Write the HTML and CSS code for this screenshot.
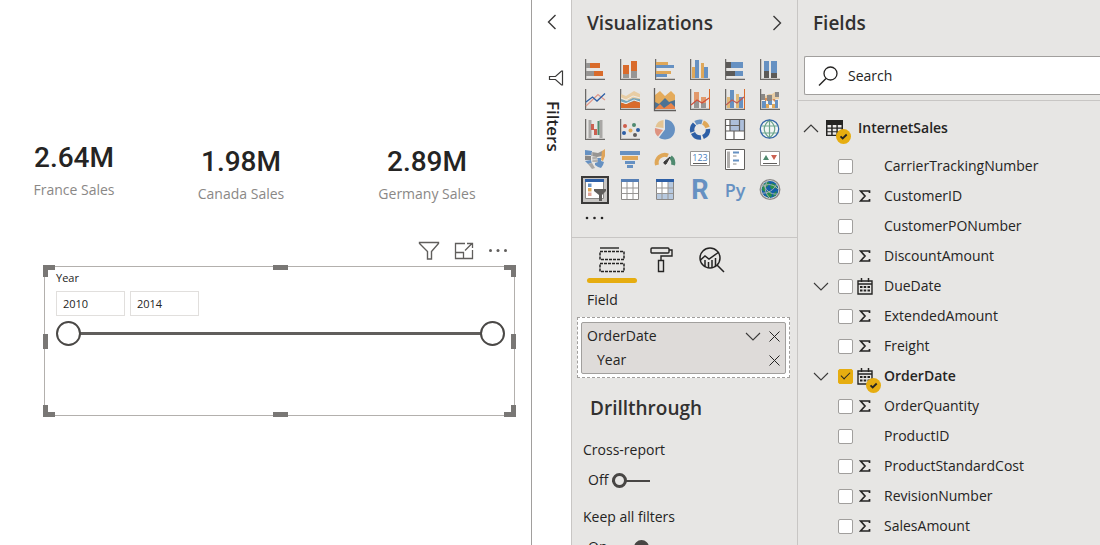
FILE: index.html
```html
<!DOCTYPE html>
<html lang="en">
<head>
<meta charset="utf-8">
<title>Sales report</title>
<link rel="stylesheet" href="styles.css">
</head>
<body>
<svg class="defs" aria-hidden="true">
  <symbol id="axis" viewBox="0 0 22 22"><path d="M2.5 0v19M2 19.500h19" stroke="#c8c6c4" fill="none"/><path d="M1.500 0v21M1 20.500h20" stroke="#6b6967" fill="none"/></symbol>
  <symbol id="sigma" viewBox="0 0 12 12"><path d="M10.500 3V1H1.500L6 6 1.500 11h9V9" fill="none" stroke="#252423" stroke-width="1.700"/></symbol>
  <symbol id="calendar" viewBox="0 0 16 17"><path d="M1 3h14v13H1z" fill="none" stroke="#252423" stroke-width="1.400"/><path d="M1 6h14M4.500 0v4M11.500 0v4" stroke="#252423" stroke-width="1.500"/><path d="M3 8h2.500v2H3zM6.700 8h2.500v2H6.700zM10.500 8H13v2h-2.500zM3 11.500h2.500v2H3zM6.700 11.500h2.500v2H6.700zM10.500 11.500H13v2h-2.500z" fill="#252423"/></symbol>
  <symbol id="down" viewBox="0 0 16 9"><path d="M1 1l7 7 7-7" fill="none" stroke="#3b3a39" stroke-width="1.100"/></symbol>
  <symbol id="cross" viewBox="0 0 11 11"><path d="M.5.5l10 10M10.500.5l-10 10" fill="none" stroke="#252423"/></symbol>
  <symbol id="badge" viewBox="0 0 15 15"><circle cx="7.500" cy="7.500" r="7.500" fill="#e6ad10"/><path d="M4.500 7.300l2.200 2.200 4-4" fill="none" stroke="#252423" stroke-width="1.800"/></symbol>
</svg>
<div class="app">
  <main class="canvas">
    <div class="cards">
      <section class="card"><div class="card-value">2.64M</div><div class="card-label">France Sales</div></section>
      <section class="card card-low"><div class="card-value">1.98M</div><div class="card-label">Canada Sales</div></section>
      <section class="card card-low"><div class="card-value">2.89M</div><div class="card-label">Germany Sales</div></section>
    </div>
    <div class="visual-tools">
      <button aria-label="Filters on this visual"><svg width="22" height="20" viewBox="0 0 22 20"><path d="M1.500 1.500h19v1l-7 8v7.500h-4v-7.500l-8-8z" fill="none" stroke="#605e5c" stroke-width="1.400"/></svg></button>
      <button aria-label="Focus mode"><svg width="20" height="18" viewBox="0 0 20 18"><path d="M11 1.500H1.500v15h17V8M1.500 10.500h8v6M11 8.500l7-7M13 1.500h5.500V6" fill="none" stroke="#605e5c" stroke-width="1.300"/></svg></button>
      <button aria-label="More options"><svg width="20" height="18" viewBox="0 0 20 18" fill="#605e5c"><circle cx="2.500" cy="8.500" r="1.500"/><circle cx="10" cy="8.500" r="1.500"/><circle cx="17.500" cy="8.500" r="1.500"/></svg></button>
    </div>
    <section class="slicer">
      <i class="grip nw"></i><i class="grip n"></i><i class="grip ne"></i><i class="grip w"></i><i class="grip e"></i><i class="grip sw"></i><i class="grip s"></i><i class="grip se"></i>
      <h3 class="slicer-title">Year</h3>
      <div class="years">
        <input type="text" class="year" value="2010" aria-label="Start year">
        <input type="text" class="year" value="2014" aria-label="End year">
      </div>
      <div class="range">
        <input type="range" min="2010" max="2014" value="2010" aria-label="From">
        <input type="range" min="2010" max="2014" value="2014" aria-label="To">
      </div>
    </section>
  </main>

  <aside class="filters">
    <button aria-label="Expand filters"><svg width="10" height="16" viewBox="0 0 10 16"><path d="M8.500 1l-7 7 7 7" fill="none" stroke="#3b3a39" stroke-width="1.400"/></svg></button>
    <svg class="filters-icon" width="16" height="16" viewBox="0 0 16 16"><path d="M14.500 1v14h-1L7.500 9.500h-6v-3h6L13.500 1z" fill="none" stroke="#3b3a39" stroke-width="1.200"/></svg>
    <h2 class="filters-title">Filters</h2>
  </aside>

  <section class="viz">
    <header class="pane-head"><h2>Visualizations</h2>
      <button aria-label="Collapse"><svg width="10" height="16" viewBox="0 0 10 16"><path d="M1.500 1l7 7-7 7" fill="none" stroke="#3b3a39" stroke-width="1.400"/></svg></button></header>
    <div class="gallery">
      <button aria-label="Stacked bar chart"><svg viewBox="0 0 22 22"><use href="#axis"/><path d="M2 4h4v5H2zM2 12h8v5H2z" fill="#979593"/><path d="M6 4h10v5H6zM10 12h9v5h-9z" fill="#d96b2b"/></svg></button>
      <button aria-label="Stacked column chart"><svg viewBox="0 0 22 22"><use href="#axis"/><path d="M4 15h6v4H4zM12 12h6v7h-6z" fill="#979593"/><path d="M4 6h6v9H4zM12 2h6v10h-6z" fill="#d96b2b"/></svg></button>
      <button aria-label="Clustered bar chart"><svg viewBox="0 0 22 22"><use href="#axis"/><path d="M2 3h12v3H2zM2 12h15v3H2z" fill="#dfa758"/><path d="M2 6h18v3H2zM2 15h11v3H2z" fill="#6691c2"/></svg></button>
      <button aria-label="Clustered column chart"><svg viewBox="0 0 22 22"><use href="#axis"/><path d="M3 8h3v11H3zM12 4h3v15h-3z" fill="#dfa758"/><path d="M6 1h4v18H6zM15 8h4v11h-4z" fill="#6691c2"/></svg></button>
      <button aria-label="100% stacked bar chart"><svg viewBox="0 0 22 22"><use href="#axis"/><path d="M2 3h5v6H2zM2 12h9v5H2z" fill="#5c5a58"/><path d="M7 3h12v6H7zM11 12h8v5h-8z" fill="#6691c2"/></svg></button>
      <button aria-label="100% stacked column chart"><svg viewBox="0 0 22 22"><use href="#axis"/><path d="M5 12h5v7H5zM12 14h6v5h-6z" fill="#5c5a58"/><path d="M5 2h5v10H5zM12 2h6v12h-6z" fill="#6691c2"/></svg></button>

      <button aria-label="Line chart"><svg viewBox="0 0 22 22"><use href="#axis"/><path d="M2 17L14 5.500l3 2.500 4 3" fill="none" stroke="#e0988a" stroke-width="1.200"/><path d="M2 13l6.500-5 4.500 4 8-7.500" fill="none" stroke="#2d5fa6" stroke-width="1.300"/></svg></button>
      <button aria-label="Area chart"><svg viewBox="0 0 22 22"><use href="#axis"/><path d="M2 5l5 2 8-5 6 3v6H2z" fill="#e8cda4"/><path d="M2 10l6 2 6-3 7 1v4H2z" fill="#78a5ba"/><path d="M2 13l5 2 8-3 6 1v6H2z" fill="#d96b2b"/><path d="M2 9l5 2 7-4 7 2M2 13l5 1.500 8-3.500 6 2" stroke="#eeece8" fill="none"/></svg></button>
      <button aria-label="Stacked area chart"><svg viewBox="0 0 22 22"><path d="M1 6l5-4 5 5 6-5 4 4v14H1z" fill="#e4ab5b"/><path d="M1 13l4 2 6-6 4 4 6-2v9H1z" fill="#4c7294"/><path d="M1 20l5-5 4 4 7-5 4 4v2z" fill="#e98449"/><path d="M.5-1v22.500H22" fill="none" stroke="#605e5c" stroke-width="1.300"/></svg></button>
      <button aria-label="Line and stacked column chart"><svg viewBox="0 0 22 22"><use href="#axis"/><path d="M5 12h5v7H5zM12 14h5v5h-5z" fill="#979593"/><path d="M5 3h5v9H5zM12 8h5v6h-5z" fill="#e2996b"/><path d="M20.500 0v20" stroke="#d96b2b"/><path d="M2 16l6-5 5 3 7-5" fill="none" stroke="#cf4f3a" stroke-width="1.200"/></svg></button>
      <button aria-label="Line and clustered column chart"><svg viewBox="0 0 22 22"><use href="#axis"/><path d="M3 8h3v11H3zM12 5h3v14h-3z" fill="#dfb877"/><path d="M6 1h4v18H6zM15 8h4v11h-4z" fill="#6691c2"/><path d="M20.500 0v20" stroke="#d96b2b"/><path d="M2 16l6-5 5 3 7-6" fill="none" stroke="#c15a55" stroke-width="1.200"/></svg></button>
      <button aria-label="Ribbon chart"><svg viewBox="0 0 22 22"><use href="#axis"/><path d="M3 7h3l4-2h3l3-2h4v7H3z" fill="#e8cda4"/><path d="M3 11h3l4 2h3l3-2h4v8H3z" fill="#f5f3f0"/><path d="M6 9h3l-3 5zM13 10h3l2 5z" fill="#d98c54"/><path d="M2 5h4v6H2zM8 6h5v6H8zM16 3h4v5h-4z" fill="#8a8886"/><path d="M3 12h4v7H3zM9 12h4v4H9zM16 11h3v8h-3z" fill="#6691c2"/><path d="M7 15h3v4H7zM13 15h3v4h-3z" fill="#dfa758"/></svg></button>

      <button aria-label="Waterfall chart"><svg viewBox="0 0 22 22"><use href="#axis"/><path d="M6 1v18M17 1v18" stroke="#a9a7a5" stroke-width="3"/><path d="M8.500 5v6M11.500 10v6" stroke="#cb6151" stroke-width="3"/><path d="M14.500 2v14" stroke="#4f8a6f" stroke-width="2"/></svg></button>
      <button aria-label="Scatter chart"><svg viewBox="0 0 22 22"><use href="#axis"/><circle cx="6" cy="7" r="2" fill="#cf5f4c"/><circle cx="15" cy="6" r="2" fill="#4f8a6f"/><circle cx="5" cy="14" r="2" fill="#2d5fa6"/><circle cx="11.500" cy="11.500" r="2" fill="#dfa758"/><circle cx="19" cy="11" r="2" fill="#2d5fa6"/><circle cx="16" cy="16" r="2" fill="#605e5c"/></svg></button>
      <button aria-label="Pie chart"><svg viewBox="0 0 22 22"><path d="M11 10.500V.5a10 10 0 1 1-6 18z" fill="#6691c2"/><path d="M9.500 9V1A9 9 0 0 0 1.500 8z" fill="#e3c493"/><path d="M9 11L1 9a9 9 0 0 0 3 8.500z" fill="#de9380"/></svg></button>
      <button aria-label="Donut chart"><svg viewBox="0 0 22 22"><g fill="none" stroke-width="4.500"><path d="M14 3.500a8 8 0 0 1 4.500 5" stroke="#dfa758"/><path d="M19 10a8 8 0 0 1-5 8M12 18.500a8 8 0 0 1-8-4.500M3.500 13a8 8 0 0 1 2-8" stroke="#2d5fa6"/><path d="M6.500 4a8 8 0 0 1 6.500-1" stroke="#6691c2"/></g></svg></button>
      <button aria-label="Treemap"><svg viewBox="0 0 22 22"><path d="M1.500.5h19v20h-19z" fill="#fff"/><path d="M6 1h14v11H6z" fill="#adbfdb"/><path d="M1.500.5h19v20h-19zM6 1v11M15.500 1v11M1 12h20M6 6.500h9.500M1 6.500h5M10 12v8" fill="none" stroke="#605e5c" stroke-width="1.200"/></svg></button>
      <button aria-label="Map"><svg viewBox="0 0 22 22"><circle cx="10.500" cy="10" r="9" fill="#f3f6f5"/><path d="M2 7h17M2 14h17M10.500 1v18M10.500 1c-7 6-7 12 0 18M10.500 1c7 6 7 12 0 18" fill="none" stroke="#6ca58c" stroke-width="1.200"/><circle cx="10.500" cy="10" r="9.200" fill="none" stroke="#3568a8" stroke-width="1.300"/></svg></button>

      <button aria-label="Filled map"><svg viewBox="0 0 22 22"><path d="M1 1l7 1v4L1 6z" fill="#6691c2"/><path d="M8 3l6 1 4-2v5l-5 1-6-1z" fill="#979593"/><path d="M18 2l3-2v7l-2 5-2-1z" fill="#e0a458"/><path d="M1 6l6 1v4H1z" fill="#8a8886"/><path d="M8 8h5l1 5H8z" fill="#b3b0ad"/><path d="M1 12l6-1 1 3-4 1z" fill="#6691c2"/><path d="M13 9h4v3l3 1-1 3-2 3-3-1-3-2v-2l3-1z" fill="#6691c2"/><path d="M4 15l4-1 3 5-3 1z" fill="#a9a7a5"/><path d="M1 6.500h6M7 11l7-1M8 3v11" stroke="#e7e6e4" stroke-width=".6"/></svg></button>
      <button aria-label="Funnel"><svg viewBox="0 0 22 22"><path d="M1 2h20v4H1zM6 12h10v3H6zM8 16h6v3H8z" fill="#6691c2"/><path d="M3 7h16v4H3z" fill="#dfa758"/></svg></button>
      <button aria-label="Gauge"><svg viewBox="0 0 22 22"><g fill="none" stroke-width="4"><path d="M3 16a8 8 0 0 1 11-9.500" stroke="#dfa758"/><path d="M16.500 8a8 8 0 0 1 2.500 8" stroke="#4f8a6f"/></g><path d="M10 13l6-5-4 7a1.500 1.500 0 0 1-2-2" fill="#3b3a39" stroke="#3b3a39"/></svg></button>
      <button aria-label="Card"><svg viewBox="0 0 22 22"><path d="M1.500 2.500h19v14h-19z" fill="#fff" stroke="#979593"/><text x="11" y="11.500" text-anchor="middle" class="icon-digits">123</text><path d="M4 14.500h14" stroke="#605e5c"/></svg></button>
      <button aria-label="Multi-row card"><svg viewBox="0 0 22 22"><path d="M1.500.5h19v20h-19z" fill="#fff" stroke="#605e5c"/><path d="M3 2.500h3v16.500H3z" fill="#b0aeac"/><path d="M9 3.500h6M9 11.500h6" stroke="#6691c2" stroke-width="2"/><path d="M9 7h3.500M9 15h3.500" stroke="#8a8886" stroke-width="1"/></svg></button>
      <button aria-label="KPI"><svg viewBox="0 0 22 22"><path d="M1.500 2.500h19v14h-19z" fill="#fff" stroke="#979593"/><path d="M4 11l3-5 3 5z" fill="#4f8a6f"/><path d="M12 6h6l-3 5z" fill="#cb6151"/><path d="M4 14.500h14" stroke="#605e5c"/></svg></button>

      <button class="selected" aria-label="Slicer" aria-pressed="true"><svg viewBox="0 0 22 22"><path d="M1.500 1.500h18v18h-18z" fill="#fff" stroke="#8a8886"/><path d="M1 0h19v3H1z" fill="#2d5fa6"/><path d="M4 4.500h3.500V8H4z" fill="#6691c2"/><path d="M4 9h3.500v3.500H4z" fill="#dfa758"/><path d="M4 13.500h3.500V17H4z" fill="#e0a69a"/><path d="M10 10h12v2l-4 4v6h-3v-6l-5-4z" fill="#605e5c"/></svg></button>
      <button aria-label="Table"><svg viewBox="0 0 22 22"><path d="M2.500.5h17v20h-17z" fill="#fff" stroke="#8a8886"/><path d="M8 3v17M14 3v17M2 9h17M2 14.500h17" stroke="#979593"/><path d="M2 0h18v3H2z" fill="#567fb5"/></svg></button>
      <button aria-label="Matrix"><svg viewBox="0 0 22 22"><path d="M2.500.5h17v20h-17z" fill="#fff" stroke="#8a8886"/><path d="M14 3h5v17H3v-5h11z" fill="#b7c9df"/><path d="M8 3v17M14 3v17M2 9h17M2 14.500h17" stroke="#979593"/><path d="M2 0h18v3H2z" fill="#2d5fa6"/></svg></button>
      <button class="lang r" aria-label="R script visual">R</button>
      <button class="lang" aria-label="Python visual">Py</button>
      <button aria-label="ArcGIS map"><svg viewBox="0 0 22 22"><circle cx="11" cy="10.500" r="8.500" fill="#1460a8"/><path d="M4 6l4-3 3 1-3 4-2 1v4l-3-2zM13 4l4 2 2 4-3-1-4 1-1-3zM8 12l4 1 1 4-3 2-3-3zM15 14l3-2-1 4-3 2z" fill="#2a9048"/><circle cx="11" cy="10.500" r="9.800" fill="none" stroke="#8a8886" stroke-width="1.300"/><path d="M4 3c2 8 7 13 15 12M9 1c-4 6-4 13 3 19M2 8c7-4 13-3 18 3M2 14c6 1 14-3 16-10" fill="none" stroke="#a9b1b6"/></svg></button>
    </div>
    <button class="more-visuals" aria-label="Get more visuals"><svg width="20" height="4" viewBox="0 0 20 4" fill="#252423"><circle cx="2" cy="2" r="1.300"/><circle cx="9.500" cy="2" r="1.300"/><circle cx="17" cy="2" r="1.300"/></svg></button>

    <div class="tabs">
      <button class="tab active" aria-label="Fields"><svg width="26" height="26" viewBox="0 0 26 26" fill="none" stroke="#252423"><path d="M1 1h19" stroke-width="1.400"/><path d="M1 4.500h24v8H1zM1 16.500h24v8H1z" stroke-width="1.500" stroke-dasharray="3 1"/></svg></button>
      <button class="tab" aria-label="Format"><svg width="26" height="26" viewBox="0 0 26 26" fill="none" stroke="#252423" stroke-width="1.400"><rect x="2" y="1" width="18" height="5" rx="1"/><path d="M20 3h3v6H12v4M9.500 13.500h5v11h-5z"/></svg></button>
      <button class="tab" aria-label="Analytics"><svg width="26" height="26" viewBox="0 0 26 26" fill="none" stroke="#252423" stroke-width="1.500"><circle cx="11" cy="11" r="10"/><path d="M18 18l7 7M1.500 13l4.500-4 4 3L20 5M6 13v6M9.500 15v6M13 13v8M16.500 11v8"/></svg></button>
    </div>
    <div class="field-label">Field</div>
    <div class="well">
      <div class="well-item">
        <div class="well-row"><span>OrderDate</span><button aria-label="Options"><svg width="16" height="9"><use href="#down"/></svg></button><button aria-label="Remove OrderDate"><svg width="11" height="11"><use href="#cross"/></svg></button></div>
        <div class="well-row sub"><span>Year</span><button aria-label="Remove Year"><svg width="11" height="11"><use href="#cross"/></svg></button></div>
      </div>
    </div>
    <h2 class="drill">Drillthrough</h2>
    <div class="option"><div class="option-title">Cross-report</div>
      <label class="switch"><span>Off</span><input type="checkbox"></label></div>
    <div class="option"><div class="option-title">Keep all filters</div>
      <label class="switch"><span>On</span><input type="checkbox" checked></label></div>
  </section>

  <section class="fields">
    <header class="pane-head"><h2>Fields</h2></header>
    <label class="search"><svg width="20" height="20" viewBox="0 0 20 20"><circle cx="12.500" cy="7.500" r="6.500" fill="none" stroke="#252423" stroke-width="1.300"/><path d="M8 12.500L1 19.500" stroke="#252423" stroke-width="1.400"/></svg><input type="text" placeholder="Search" aria-label="Search"></label>
    <div class="tree">
      <div class="table-row"><button aria-label="Collapse InternetSales"><svg width="16" height="9" viewBox="0 0 16 9"><path d="M1 8l7-7 7 7" fill="none" stroke="#3b3a39" stroke-width="1.200"/></svg></button>
        <span class="type"><svg width="17" height="16" viewBox="0 0 17 16"><path d="M0 0h17v16H0z" fill="#252423"/><path d="M1.500 5h3.700v2.500H1.500zM6.700 5h3.700v2.500H6.700zM11.800 5h3.700v2.500h-3.700zM1.500 8.700h3.700v2.500H1.500zM6.700 8.700h3.700v2.500H6.700zM11.800 8.700h3.700v2.500h-3.700zM1.500 12.300h3.700v2.500H1.500zM6.700 12.300h3.700v2.500H6.700z" fill="#eceae9"/></svg><svg class="badge" width="15" height="15"><use href="#badge"/></svg></span>
        <span class="table-name">InternetSales</span></div>
      <label class="field"><i></i><input type="checkbox"><i></i><span>CarrierTrackingNumber</span></label>
      <label class="field"><i></i><input type="checkbox"><svg class="sum" width="12" height="12"><use href="#sigma"/></svg><span>CustomerID</span></label>
      <label class="field"><i></i><input type="checkbox"><i></i><span>CustomerPONumber</span></label>
      <label class="field"><i></i><input type="checkbox"><svg class="sum" width="12" height="12"><use href="#sigma"/></svg><span>DiscountAmount</span></label>
      <label class="field"><svg width="16" height="9"><use href="#down"/></svg><input type="checkbox"><b class="type"><svg width="16" height="17"><use href="#calendar"/></svg></b><span>DueDate</span></label>
      <label class="field"><i></i><input type="checkbox"><svg class="sum" width="12" height="12"><use href="#sigma"/></svg><span>ExtendedAmount</span></label>
      <label class="field"><i></i><input type="checkbox"><svg class="sum" width="12" height="12"><use href="#sigma"/></svg><span>Freight</span></label>
      <label class="field used"><svg width="16" height="9"><use href="#down"/></svg><input type="checkbox" checked><b class="type"><svg width="16" height="17"><use href="#calendar"/></svg><svg class="badge" width="15" height="15"><use href="#badge"/></svg></b><span>OrderDate</span></label>
      <label class="field"><i></i><input type="checkbox"><svg class="sum" width="12" height="12"><use href="#sigma"/></svg><span>OrderQuantity</span></label>
      <label class="field"><i></i><input type="checkbox"><i></i><span>ProductID</span></label>
      <label class="field"><i></i><input type="checkbox"><svg class="sum" width="12" height="12"><use href="#sigma"/></svg><span>ProductStandardCost</span></label>
      <label class="field"><i></i><input type="checkbox"><svg class="sum" width="12" height="12"><use href="#sigma"/></svg><span>RevisionNumber</span></label>
      <label class="field"><i></i><input type="checkbox"><svg class="sum" width="12" height="12"><use href="#sigma"/></svg><span>SalesAmount</span></label>
    </div>
  </section>
</div>
</body>
</html>
```
FILE: styles.css
```css
*, *::before, *::after { box-sizing: border-box; }
body { margin: 0; font-family: "Open Sans", "Noto Sans", sans-serif; font-size: 14px; line-height: 20px; color: #252423; background: #fff; }
h2, h3 { margin: 0; }
button { display: flex; align-items: center; justify-content: center; padding: 0; border: 0; background: none; font: inherit; color: inherit; }
input { margin: 0; font: inherit; color: inherit; }
.defs { display: none; }
.app { display: flex; height: 100vh; overflow: hidden; }

/* Report canvas */
.canvas { flex: 1; min-width: 0; padding-top: 142px; background: #fff; }
.cards { display: grid; grid-template-columns: 148fr 186fr 186fr; padding-right: 11px; text-align: center; }
.card-low { padding-top: 4px; }
.card-value { font-family: Roboto, sans-serif; font-size: 28px; font-weight: 500; line-height: 32px; }
.card-label { margin-top: 6px; color: #8a8886; }
.visual-tools { display: flex; justify-content: flex-end; gap: 14px; height: 20px; margin: 37px 23px 5px 0; }
.slicer { position: relative; height: 150px; margin: 0 16px 0 44px; padding: 3px 9px 0 11px; border: 1px solid #b3b0ad; }
.slicer-title { font-size: 11px; font-weight: 400; line-height: 16px; }
.years { display: flex; gap: 5px; margin-top: 5px; }
.year { width: 69px; height: 25px; padding: 0 6px; border: 1px solid #e1dfdd; font-size: 11px; }
.range { position: relative; height: 25px; margin-top: 5px; }
.range::before { content: ""; position: absolute; top: 11px; left: 12px; right: 12px; height: 3px; background: #605e5c; }
.range input { position: absolute; inset: 0; width: 100%; appearance: none; background: none; pointer-events: none; }
.range input::-webkit-slider-thumb { appearance: none; box-sizing: border-box; width: 25px; height: 25px; border: 2px solid #4a4846; border-radius: 50%; background: #fff; pointer-events: auto; }
.grip { position: absolute; width: 12px; height: 12px; border: 0 solid #797775; }
.nw, .n, .ne { top: -2px; border-top-width: 5px; }
.sw, .s, .se { bottom: -2px; border-bottom-width: 5px; }
.nw, .w, .sw { left: -2px; border-left-width: 5px; }
.ne, .e, .se { right: -2px; border-right-width: 5px; }
.n, .s { left: calc(50% - 7px); width: 15px; height: 5px; }
.w, .e { top: calc(50% - 7px); width: 5px; height: 15px; }

/* Collapsed filters pane */
.filters { display: flex; flex: none; flex-direction: column; align-items: center; width: 40px; padding-top: 14px; border-left: 1px solid #a19f9d; background: #fff; }
.filters-icon { margin: 40px 0 0 8px; }
.filters-title { margin: 15px 0 0 2px; font-size: 17px; font-weight: 600; line-height: 20px; writing-mode: vertical-rl; }

/* Shared pane pieces */
.viz, .fields { flex: none; border-left: 1px solid #c8c6c4; background: #e7e6e4; }
.pane-head { display: flex; align-items: center; justify-content: space-between; height: 45px; padding: 0 15px; }
.pane-head h2, .drill { font-size: 19px; font-weight: 600; line-height: 24px; color: #323130; }

/* Visualizations */
.viz { width: 226px; }
.gallery { display: grid; grid-template-columns: repeat(6, 28px); gap: 2px 7px; padding: 11px 0 0 9px; }
.gallery button { height: 28px; }
.gallery svg { flex: none; width: 22px; height: 22px; overflow: visible; }
.gallery .selected { border: 2px solid #3b3a39; background: #c8c6c4; }
.icon-digits { font: 9px "Open Sans", sans-serif; fill: #4a7ebb; }
.lang { color: #6691c2; font-size: 18px; font-weight: 600; }
.lang.r { font-family: Roboto, sans-serif; font-size: 27px; font-weight: 700; }
.more-visuals { margin: 12px 0 0 13px; }
.tabs { display: flex; height: 46px; margin-top: 17px; padding: 4px 15px 0; border-top: 1px solid #c8c6c4; }
.tab { position: relative; width: 50px; border-bottom: 5px solid transparent; }
.tab.active::after { content: ""; position: absolute; right: 0; bottom: -5px; left: 0; height: 5px; border-radius: 3px; background: #e6ad10; }
.field-label { margin: 7px 15px; }
.well { margin: 0 7px 0 5px; padding: 4px 3px 3px; border: 1px dashed #a19f9d; background: #fff; }
.well-item { padding: 1px 4px 1px 5px; border: 1px solid #a19f9d; border-radius: 2px; background: #dedbd9; }
.well-row { display: flex; align-items: center; gap: 8px; height: 24px; padding-right: 1px; }
.well-row span { flex: 1; }
.well-row.sub { padding-left: 10px; }
.drill { margin: 18px 18px 20px; }
.option { padding-left: 11px; margin-bottom: 17px; }
.option-title { line-height: 20px; }
.switch { display: flex; align-items: center; gap: 4px; margin-top: 10px; padding-left: 5px; }
.switch input { position: relative; width: 38px; height: 15px; appearance: none; }
.switch input::before { content: ""; position: absolute; top: 7px; right: 0; left: 0; height: 2px; background: #484644; }
.switch input::after { content: ""; position: absolute; top: 0; left: 0; width: 15px; height: 15px; border: 3px solid #484644; border-radius: 50%; background: #e7e6e4; }
.switch input:checked::after { right: 0; left: auto; background: #484644; }

/* Fields */
.fields { width: 303px; }
.search { display: flex; align-items: center; gap: 8px; height: 39px; margin: 11px 0 5px 6px; padding-left: 13px; border: 1px solid #a19f9d; border-right: 0; border-radius: 2px 0 0 2px; background: #fff; }
.search input { flex: 1; min-width: 0; border: 0; outline: 0; background: none; }
.search input::placeholder { color: #252423; opacity: 1; }
.tree { padding-top: 12px; border-top: 1px solid #c8c6c4; }
.table-row { display: grid; grid-template-columns: 16px 17px 1fr; align-items: center; column-gap: 7px; height: 30px; padding-left: 5px; }
.table-name { padding-left: 8px; font-weight: 600; }
.type { position: relative; display: flex; }
.badge { position: absolute; right: -8px; bottom: -8px; }
.field { display: grid; grid-template-columns: 25px 15px 31px 1fr; align-items: center; justify-items: start; height: 30px; padding-left: 15px; }
.table-row + .field { margin-top: 8px; }
.field input { display: grid; place-items: center; width: 15px; height: 15px; border: 1px solid #a19f9d; border-radius: 2px; background: #fff; appearance: none; }
.field input:checked { border-color: #e6ad10; background: #e6ad10; }
.field input:checked::after { content: ""; width: 9px; height: 5px; margin-bottom: 3px; border: solid #252423; border-width: 0 0 1px 1px; transform: rotate(-45deg); }
.field .type { margin-left: 4px; }
.sum { margin-left: 6px; }
.field > span { white-space: nowrap; }
.used > span { font-weight: 600; }
```
